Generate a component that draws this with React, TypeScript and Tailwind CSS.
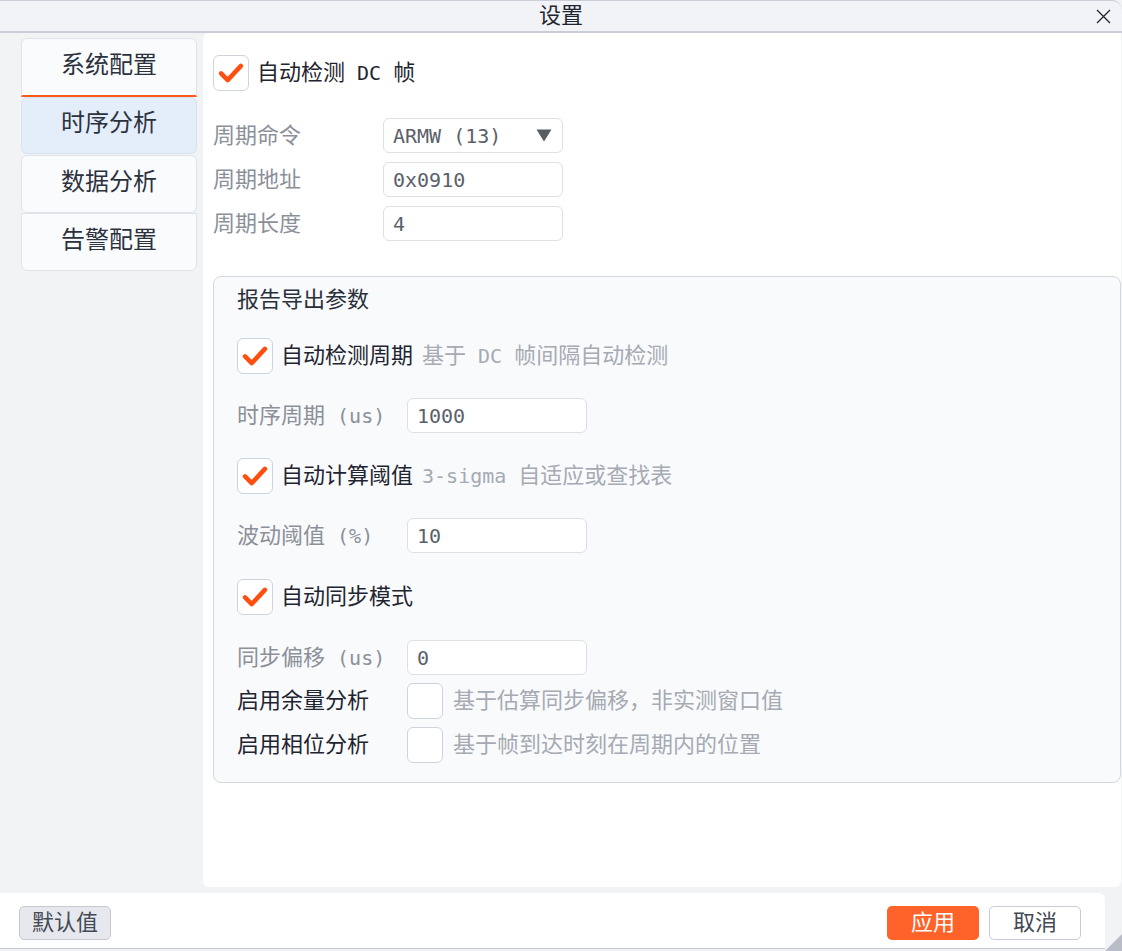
import React from "react";

const FONT = "font-['DejaVu_Sans_Mono','Noto_Sans_CJK_SC',monospace]";

// Latin runs are set a little smaller than the CJK runs around them
function Mix({ text }: { text: string }) {
  const parts = text.split(/([\u0000-\u00ff]+)/).filter((p) => p.length > 0);
  return (
    <>
      {parts.map((p, i) =>
        /^[\u0000-\u00ff]+$/.test(p) ? (
          <span key={i} className="text-[20px] whitespace-pre">
            {p}
          </span>
        ) : (
          <span key={i}>{p}</span>
        )
      )}
    </>
  );
}

function Check({ checked }: { checked: boolean }) {
  return (
    <div className="w-[36px] h-[36px] shrink-0 rounded-[6px] border border-[#cfd4dc] bg-white flex items-center justify-center">
      {checked && (
        <svg width="36" height="36" viewBox="0 0 36 36">
          <path
            d="M7.5 18.5 L14.5 25.5 L28.5 10.5"
            fill="none"
            stroke="#ff4f10"
            strokeWidth="4.8"
            strokeLinecap="round"
            strokeLinejoin="round"
          />
        </svg>
      )}
    </div>
  );
}

function Field({ value, select }: { value: string; select?: boolean }) {
  return (
    <div className="w-[180px] h-[35px] rounded-[6px] border border-[#dde0e6] bg-white flex items-center pl-[9px] pr-[10px] text-[#5b616b]">
      <span className="text-[20px] whitespace-pre flex-1">{value}</span>
      {select && (
        <svg width="16" height="13" viewBox="0 0 16 13">
          <polygon points="0.5,0.5 15.5,0.5 8,12.5" fill="#575c65" />
        </svg>
      )}
    </div>
  );
}

function CheckRow({ label, hint, checked = true }: { label: string; hint?: string; checked?: boolean }) {
  return (
    <div className="flex items-center h-[36px]">
      <Check checked={checked} />
      <span className="ml-[8px] text-[#1f2530]">
        <Mix text={label} />
      </span>
      {hint && (
        <span className="ml-[9px] text-[#a5aab3]">
          <Mix text={hint} />
        </span>
      )}
    </div>
  );
}

function FormRow({ label, value, select, labelW }: { label: string; value: string; select?: boolean; labelW: string }) {
  return (
    <div className="flex items-center h-[35px]">
      <span className={`${labelW} shrink-0 text-[#8b9099]`}>
        <Mix text={label} />
      </span>
      <Field value={value} select={select} />
    </div>
  );
}

const tabs = ["系统配置", "时序分析", "数据分析", "告警配置"];

export default function App() {
  return (
    <div className={`w-[1122px] h-[951px] flex flex-col bg-[#f2f3f5] overflow-hidden text-[22px] leading-[30px] ${FONT}`}>
      {/* title bar */}
      <div className="h-[33px] shrink-0 relative flex items-center justify-center bg-[#f2f3f6] border-t border-b-2 border-[#c9cdd8] rounded-tr-[10px]">
        <span className="text-[#1f2530] text-[22px]">设置</span>
        <svg className="absolute right-[11px] top-[8px]" width="15" height="15" viewBox="0 0 15 15">
          <path d="M1 1 L14 14 M14 1 L1 14" stroke="#1f2530" strokeWidth="1.3" />
        </svg>
      </div>

      {/* body */}
      <div className="flex-1 flex min-h-0">
        <div className="w-[203px] shrink-0 pl-[21px] pr-[6px] pt-[5px] flex flex-col">
          <div className="h-[59px] pb-[4px] flex items-center justify-center rounded-t-[6px] border border-b-0 border-[#dfe3ea] bg-[#fafbfd] text-[24px] text-[#2c323d] border-b-2 border-b-[#ff5a1c]">
            {tabs[0]}
          </div>
          <div className="h-[57px] pb-[5px] flex items-center justify-center rounded-[6px] border border-[#d9e2ee] bg-[#e4eefb] text-[24px] text-[#2c323d]">
            {tabs[1]}
          </div>
          <div className="h-[58px] mt-[1px] pb-[4px] flex items-center justify-center rounded-[6px] border border-[#dfe3ea] bg-[#fafbfd] text-[24px] text-[#2c323d]">
            {tabs[2]}
          </div>
          <div className="h-[58px] pb-[4px] flex items-center justify-center rounded-b-[6px] border border-[#dfe3ea] bg-[#fafbfd] text-[24px] text-[#2c323d]">
            {tabs[3]}
          </div>
        </div>

        <div className="flex-1 bg-white rounded-tl-[6px] rounded-b-[6px] pl-[10px] pt-[22px] mr-[1px]">
          <CheckRow label="自动检测 DC 帧" />

          <div className="mt-[27px] flex flex-col gap-[9px]">
            <FormRow label="周期命令" value="ARMW (13)" select labelW="w-[170px]" />
            <FormRow label="周期地址" value="0x0910" labelW="w-[170px]" />
            <FormRow label="周期长度" value="4" labelW="w-[170px]" />
          </div>

          <div className="mt-[35px] rounded-[8px] border border-[#d4d8df] bg-[#f9fafc] pl-[23px] pt-[8px] pb-[19px]">
            <div className="h-[30px] text-[#2a303b]">报告导出参数</div>

            <div className="mt-[23px]">
              <CheckRow label="自动检测周期" hint="基于 DC 帧间隔自动检测" />
            </div>
            <div className="mt-[24px]">
              <FormRow label="时序周期 (us)" value="1000" labelW="w-[170px]" />
            </div>
            <div className="mt-[25px]">
              <CheckRow label="自动计算阈值" hint="3-sigma 自适应或查找表" />
            </div>
            <div className="mt-[24px]">
              <FormRow label="波动阈值 (%)" value="10" labelW="w-[170px]" />
            </div>
            <div className="mt-[26px]">
              <CheckRow label="自动同步模式" />
            </div>
            <div className="mt-[25px]">
              <FormRow label="同步偏移 (us)" value="0" labelW="w-[170px]" />
            </div>
            <div className="mt-[8px] flex items-center h-[36px]">
              <span className="w-[170px] shrink-0 text-[#1f2530]">启用余量分析</span>
              <Check checked={false} />
              <span className="ml-[10px] text-[#a5aab3]">基于估算同步偏移，非实测窗口值</span>
            </div>
            <div className="mt-[8px] flex items-center h-[36px]">
              <span className="w-[170px] shrink-0 text-[#1f2530]">启用相位分析</span>
              <Check checked={false} />
              <span className="ml-[10px] text-[#a5aab3]">基于帧到达时刻在周期内的位置</span>
            </div>
          </div>
        </div>
      </div>

      {/* footer */}
      <div className="h-[6px] shrink-0" />
      <div className="relative h-[58px] shrink-0 flex">
        <div className="w-[1105px] h-[56px] bg-white rounded-tr-[6px] border-b border-[#c4c8d0] flex items-center pt-[4px] pl-[19px] pr-[24px]">
          <button className="w-[92px] h-[34px] rounded-[5px] border border-[#c6cad2] bg-[#e6e8ed] text-[#434955] text-[22px] leading-none">
            默认值
          </button>
          <div className="flex-1" />
          <button className="w-[92px] h-[34px] rounded-[5px] bg-[#ff6329] text-white text-[22px] leading-none">
            应用
          </button>
          <button className="ml-[10px] w-[92px] h-[34px] rounded-[5px] border border-[#c8ccd8] bg-white text-[#434955] text-[22px] leading-none">
            取消
          </button>
        </div>
        <svg className="absolute right-0 bottom-0" width="18" height="26" viewBox="0 0 18 26">
          <polygon points="18,9 18,26 1,26" fill="#b9bdc7" />
        </svg>
      </div>
    </div>
  );
}
